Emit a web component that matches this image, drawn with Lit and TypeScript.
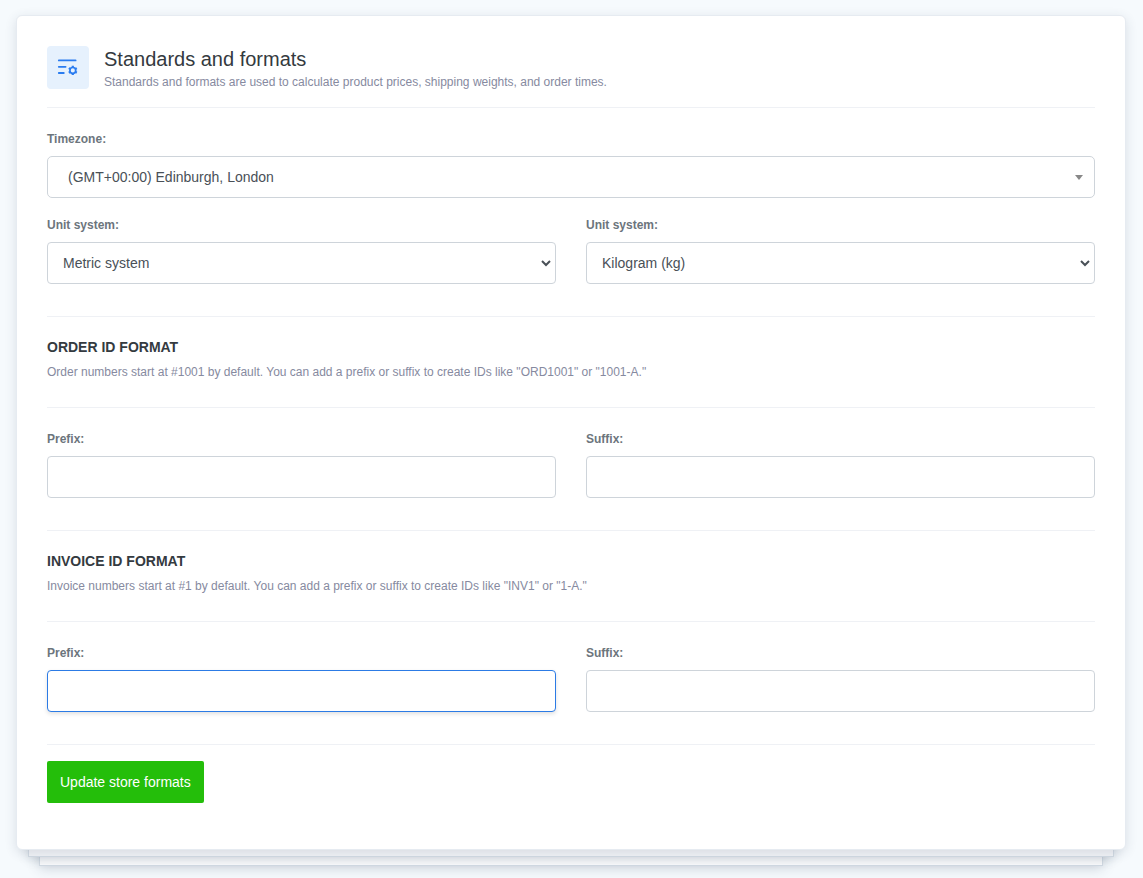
import { LitElement, html, css } from "lit";
import { customElement } from "lit/decorators.js";

@customElement("app-root")
export class AppRoot extends LitElement {
  static styles = css`
    :host {
      display: block;
      box-sizing: border-box;
      min-height: 100vh;
      padding: 15px 17px 28px 16px;
      background: #f6fafd;
      font-family: "Liberation Sans", Arial, sans-serif;
      font-size: 14px;
      color: #495057;
    }
    *,
    *::before,
    *::after {
      box-sizing: border-box;
    }
    .card {
      padding: 30px 30px 46px;
      background: #fff;
      border: 1px solid #e6ebf1;
      border-radius: 6px;
      box-shadow:
        0 3px 12px rgba(40, 60, 85, 0.14),
        0 19px 0 -13px #f3f5f8,
        0 19px 0 -12px #d3dbe4,
        0 21px 10px -12px rgba(40, 60, 85, 0.18),
        0 39px 0 -24px #f9fafc,
        0 39px 0 -23px #d3dbe4,
        0 41px 12px -23px rgba(40, 60, 85, 0.22);
    }
    .header {
      display: flex;
      gap: 15px;
      padding-bottom: 16px;
    }
    .badge {
      display: flex;
      align-items: center;
      justify-content: center;
      width: 42px;
      height: 43px;
      border-radius: 4px;
      background: #e6f1fd;
    }
    .title {
      margin: 0 0 1px;
      font-size: 20px;
      line-height: 26px;
      font-weight: 400;
      color: #343a40;
    }
    .note {
      margin: 0;
      font-size: 12px;
      line-height: 18px;
      color: #868aa0;
    }
    .rule {
      height: 1px;
      margin: 0;
      border: 0;
      background: #eff1f5;
    }
    .fields {
      display: grid;
      grid-template-columns: 1fr 1fr;
      gap: 18px 30px;
      padding: 22px 0 32px;
    }
    .field {
      display: flex;
      flex-direction: column;
      gap: 8px;
    }
    .wide {
      grid-column: 1 / -1;
    }
    .label {
      font-size: 12px;
      line-height: 18px;
      font-weight: 700;
      color: #6c757d;
    }
    .control {
      width: 100%;
      height: 42px;
      margin: 0;
      padding: 0 16px;
      border: 1px solid #ced4da;
      border-radius: 4px;
      background: #fff;
      font: inherit;
      color: #495057;
      outline: none;
    }
    .control.active {
      border-color: #2c7be5;
      box-shadow: 0 2px 4px rgba(0, 0, 0, 0.12);
    }
    .select {
      display: grid;
      align-items: center;
    }
    .select > * {
      grid-area: 1 / 1;
    }
    .select .control {
      appearance: none;
      padding: 0 15px;
    }
    .select.search .control {
      border-radius: 5px;
      padding: 0 20px;
    }
    .arrow {
      justify-self: end;
      margin-right: 5px;
      pointer-events: none;
    }
    .search .arrow {
      margin-right: 12px;
    }
    .intro {
      padding: 20px 0 26px;
    }
    .subtitle {
      margin: 0 0 6px;
      font-size: 14px;
      line-height: 20px;
      font-weight: 700;
      color: #343a40;
      text-transform: uppercase;
    }
    .save {
      height: 42px;
      margin-top: 16px;
      padding: 0 13px;
      border: 0;
      border-radius: 2px;
      background: #24be0a;
      font: inherit;
      color: #fff;
      display: block;
    }
  `;

  private chevron() {
    return html`<svg class="arrow" width="10" height="8" viewBox="0 0 10 8" aria-hidden="true">
      <path d="M1 2l4 4 4-4" fill="none" stroke="#495057" stroke-width="2" />
    </svg>`;
  }

  private idFormat(key: string, title: string, note: string, active: boolean) {
    return html`
      <div class="intro">
        <h2 class="subtitle">${title}</h2>
        <p class="note">${note}</p>
      </div>
      <hr class="rule" />
      <div class="fields">
        <div class="field">
          <label class="label" for="${key}-prefix">Prefix:</label>
          <input class="control ${active ? "active" : ""}" id="${key}-prefix" type="text" />
        </div>
        <div class="field">
          <label class="label" for="${key}-suffix">Suffix:</label>
          <input class="control" id="${key}-suffix" type="text" />
        </div>
      </div>
      <hr class="rule" />
    `;
  }

  render() {
    return html`
      <form class="card" @submit=${(e: Event) => e.preventDefault()}>
        <header class="header">
          <div class="badge">
            <svg width="22" height="23" viewBox="0 0 22 23" fill="none" stroke="#2a7cf0" aria-hidden="true">
              <path d="M1.8 4.4h16.8M1.8 10.8h6.8M1.8 17h5" stroke-width="1.8" stroke-linecap="round" />
              <circle cx="15.8" cy="14.4" r="2.9" stroke-width="1.7" />
              <path
                d="M15.8 11.4v-1.6M15.8 17.4v1.6M18.4 12.9l1.4-.8M13.2 15.9l-1.4.8M18.4 15.9l1.4.8M13.2 12.9l-1.4-.8"
                stroke-width="2.2"
              />
            </svg>
          </div>
          <div>
            <h1 class="title">Standards and formats</h1>
            <p class="note">
              Standards and formats are used to calculate product prices, shipping weights, and order times.
            </p>
          </div>
        </header>
        <hr class="rule" />
        <div class="fields">
          <div class="field wide">
            <label class="label" for="timezone">Timezone:</label>
            <div class="select search">
              <select class="control" id="timezone">
                <option>(GMT+00:00) Edinburgh, London</option>
              </select>
              <svg class="arrow" width="8" height="5" viewBox="0 0 8 5" aria-hidden="true">
                <path d="M0 0h8l-4 5z" fill="#888" />
              </svg>
            </div>
          </div>
          <div class="field">
            <label class="label" for="unit">Unit system:</label>
            <div class="select">
              <select class="control" id="unit">
                <option>Metric system</option>
              </select>
              ${this.chevron()}
            </div>
          </div>
          <div class="field">
            <label class="label" for="weight">Unit system:</label>
            <div class="select">
              <select class="control" id="weight">
                <option>Kilogram (kg)</option>
              </select>
              ${this.chevron()}
            </div>
          </div>
        </div>
        <hr class="rule" />
        ${this.idFormat(
          "order",
          "Order ID format",
          'Order numbers start at #1001 by default. You can add a prefix or suffix to create IDs like "ORD1001" or "1001-A."',
          false,
        )}
        ${this.idFormat(
          "invoice",
          "Invoice ID format",
          'Invoice numbers start at #1 by default. You can add a prefix or suffix to create IDs like "INV1" or "1-A."',
          true,
        )}
        <button class="save" type="submit">Update store formats</button>
      </form>
    `;
  }
}
